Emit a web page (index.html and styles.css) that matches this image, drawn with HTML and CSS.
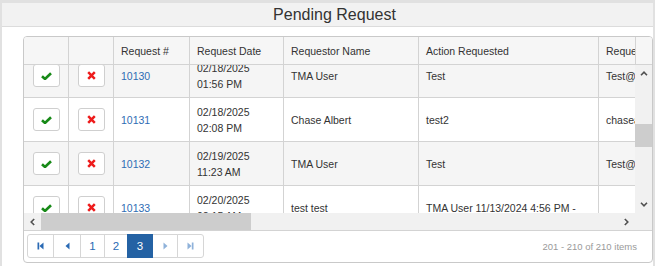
FILE: index.html
```html
<!DOCTYPE html>
<html lang="en">
  <head>
    <meta charset="UTF-8" />
    <title>Pending Request</title>
    <link rel="stylesheet" href="styles.css">
  </head>
  <body>
    <div class="panel">
      <div class="title">Pending Request</div>

      <div class="grid">
        <!-- header -->
        <div class="grid-head">
          <div class="head-view">
            <div class="row head">
              <div class="cell"></div>
              <div class="cell"></div>
              <div class="cell">Request #</div>
              <div class="cell">Request Date</div>
              <div class="cell">Requestor Name</div>
              <div class="cell">Action Requested</div>
              <div class="cell">Requestor Email</div>
              <div class="cell">Comments</div>
            </div>
          </div>
          <div class="head-spacer"></div>
        </div>

        <!-- rows -->
        <div class="grid-body">
          <div class="body-view">
            <div class="rows">
              <div class="row alt">
                <div class="cell center"><button class="act"><svg width="11" height="8" viewBox="0 0 11 8"><path d="M1 4.2 L4 7 L10 1.2" fill="none" stroke="#188a18" stroke-width="2.6"/></svg></button></div>
                <div class="cell center"><button class="act"><svg width="9" height="9" viewBox="0 0 9 9"><path d="M1.2 1.2 L7.8 7.8 M7.8 1.2 L1.2 7.8" stroke="#ee1c1c" stroke-width="2.5"/></svg></button></div>
                <div class="cell"><a href="#">10130</a></div>
                <div class="cell">02/18/2025<br>01:56 PM</div>
                <div class="cell">TMA User</div>
                <div class="cell">Test</div>
                <div class="cell">Test@tmauser.com</div>
                <div class="cell"></div>
              </div>
              <div class="row">
                <div class="cell center"><button class="act"><svg width="11" height="8" viewBox="0 0 11 8"><path d="M1 4.2 L4 7 L10 1.2" fill="none" stroke="#188a18" stroke-width="2.6"/></svg></button></div>
                <div class="cell center"><button class="act"><svg width="9" height="9" viewBox="0 0 9 9"><path d="M1.2 1.2 L7.8 7.8 M7.8 1.2 L1.2 7.8" stroke="#ee1c1c" stroke-width="2.5"/></svg></button></div>
                <div class="cell"><a href="#">10131</a></div>
                <div class="cell">02/18/2025<br>02:08 PM</div>
                <div class="cell">Chase Albert</div>
                <div class="cell">test2</div>
                <div class="cell">chasealbert@tma.com</div>
                <div class="cell"></div>
              </div>
              <div class="row alt">
                <div class="cell center"><button class="act"><svg width="11" height="8" viewBox="0 0 11 8"><path d="M1 4.2 L4 7 L10 1.2" fill="none" stroke="#188a18" stroke-width="2.6"/></svg></button></div>
                <div class="cell center"><button class="act"><svg width="9" height="9" viewBox="0 0 9 9"><path d="M1.2 1.2 L7.8 7.8 M7.8 1.2 L1.2 7.8" stroke="#ee1c1c" stroke-width="2.5"/></svg></button></div>
                <div class="cell"><a href="#">10132</a></div>
                <div class="cell">02/19/2025<br>11:23 AM</div>
                <div class="cell">TMA User</div>
                <div class="cell">Test</div>
                <div class="cell">Test@tmauser.com</div>
                <div class="cell"></div>
              </div>
              <div class="row">
                <div class="cell center"><button class="act"><svg width="11" height="8" viewBox="0 0 11 8"><path d="M1 4.2 L4 7 L10 1.2" fill="none" stroke="#188a18" stroke-width="2.6"/></svg></button></div>
                <div class="cell center"><button class="act"><svg width="9" height="9" viewBox="0 0 9 9"><path d="M1.2 1.2 L7.8 7.8 M7.8 1.2 L1.2 7.8" stroke="#ee1c1c" stroke-width="2.5"/></svg></button></div>
                <div class="cell"><a href="#">10133</a></div>
                <div class="cell">02/20/2025<br>02:15 AM</div>
                <div class="cell">test test</div>
                <div class="cell">TMA User 11/13/2024 4:56 PM -</div>
                <div class="cell"></div>
                <div class="cell"></div>
              </div>
            </div>
          </div>
          <div class="vscroll">
            <span class="sb-btn"><svg width="8" height="5" viewBox="0 0 8 5"><path d="M1 4.2 L4 1.2 L7 4.2" fill="none" stroke="#505050" stroke-width="1.6"/></svg></span>
            <div class="vtrack"><div class="vthumb"></div></div>
            <span class="sb-btn"><svg width="8" height="5" viewBox="0 0 8 5"><path d="M1 0.8 L4 3.8 L7 0.8" fill="none" stroke="#505050" stroke-width="1.6"/></svg></span>
          </div>
        </div>

        <div class="hscroll">
          <span class="sb-btn"><svg width="5" height="8" viewBox="0 0 5 8"><path d="M4.2 1 L1.2 4 L4.2 7" fill="none" stroke="#505050" stroke-width="1.6"/></svg></span>
          <div class="htrack"><div class="hthumb"></div></div>
          <span class="sb-btn"><svg width="5" height="8" viewBox="0 0 5 8"><path d="M0.8 1 L3.8 4 L0.8 7" fill="none" stroke="#505050" stroke-width="1.6"/></svg></span>
          <span class="sb-corner"></span>
        </div>

        <!-- pager -->
        <div class="pager">
          <div class="pages">
            <a class="pg w27" href="#"><svg width="7" height="8" viewBox="0 0 7 8"><rect x="0.5" y="0.5" width="1.7" height="7" fill="#2a6ab4"/><path d="M6.5 0.5 L6.5 7.5 L2.4 4 Z" fill="#2a6ab4"/></svg></a>
            <a class="pg w28" href="#"><svg width="5" height="8" viewBox="0 0 5 8"><path d="M4.5 0.5 L4.5 7.5 L0.5 4 Z" fill="#2a6ab4"/></svg></a>
            <a class="pg w25" href="#">1</a>
            <a class="pg w24" href="#">2</a>
            <span class="pg w26 active">3</span>
            <span class="pg w26 off"><svg width="5" height="8" viewBox="0 0 5 8"><path d="M0.5 0.5 L0.5 7.5 L4.5 4 Z" fill="#8fb2da"/></svg></span>
            <span class="pg w27 off"><svg width="7" height="8" viewBox="0 0 7 8"><path d="M0.5 0.5 L0.5 7.5 L4.6 4 Z" fill="#8fb2da"/><rect x="4.8" y="0.5" width="1.7" height="7" fill="#8fb2da"/></svg></span>
          </div>
          <div class="pager-info">201 - 210 of 210 items</div>
        </div>
      </div>
    </div>
  </body>
</html>
```

FILE: styles.css
```css
* {
  box-sizing: border-box;
}

body {
  margin: 0;
  background: #e1e1e1;
  font-family: "Liberation Sans", Arial, sans-serif;
  font-size: 10.5px;
  color: #333;
}

.panel {
  margin: 3px 2px 0 2px;
  height: 263px;
  background: #fff;
}

.title {
  height: 24px;
  line-height: 23px;
  padding-left: 14px;
  background: #f2f2f2;
  border-bottom: 1px solid #dcdcdc;
  text-align: center;
  font-size: 16px;
}

.grid {
  margin: 9px 0 0 21px;
  border: 1px solid #c9c9c9;
  border-radius: 4px;
  overflow: hidden;
}

/* header */
.grid-head {
  display: flex;
  height: 28px;
}

.head-view {
  flex: 1;
  min-width: 0;
  overflow: hidden;
}

.head-spacer {
  width: 17px;
  border-left: 1px solid #d3d3d3;
  border-bottom: 1px solid #d3d3d3;
  background: #f6f6f6;
}

.row {
  display: grid;
  grid-template-columns: 45px 45px 76px 94px 135px 180px 170px 200px;
  width: max-content;
}

.row.alt {
  background: #f5f5f5;
}

.cell {
  display: flex;
  align-items: center;
  padding: 6px 7px 5px;
  line-height: 16px;
  border-right: 1px solid #d3d3d3;
  border-bottom: 1px solid #d3d3d3;
  white-space: nowrap;
  overflow: hidden;
}

.cell.center {
  justify-content: center;
  padding: 0;
}

.head .cell {
  height: 28px;
  padding: 5px 7px;
  background: #f6f6f6;
}

.cell a {
  color: #2e6db4;
  text-decoration: none;
}

.act {
  width: 27px;
  height: 23px;
  padding: 0;
  border: 1px solid #cfcfcf;
  border-radius: 3px;
  background: #fff;
  display: flex;
  align-items: center;
  justify-content: center;
}

/* body + scrollbars */
.grid-body {
  display: flex;
  height: 148px;
}

.body-view {
  flex: 1;
  min-width: 0;
  overflow: hidden;
}

.rows {
  margin-top: -11px;
}

.vscroll {
  width: 17px;
  display: flex;
  flex-direction: column;
  background: #f1f1f1;
}

.sb-btn {
  width: 17px;
  height: 17px;
  flex: none;
  display: flex;
  align-items: center;
  justify-content: center;
}

.vtrack {
  flex: 1;
}

.vthumb {
  margin-top: 42px;
  height: 23px;
  background: #cdcdcd;
}

.hscroll {
  display: flex;
  height: 17px;
  background: #f1f1f1;
}

.htrack {
  flex: 1;
}

.hthumb {
  width: 210px;
  height: 17px;
  background: #cdcdcd;
}

.sb-corner {
  width: 17px;
}

/* pager */
.pager {
  display: flex;
  align-items: center;
  justify-content: space-between;
  height: 32px;
  padding: 3px 15px 4px 3px;
  border-top: 1px solid #d3d3d3;
}

.pages {
  display: flex;
}

.pg {
  height: 24px;
  margin-left: -1px;
  display: flex;
  align-items: center;
  justify-content: center;
  border: 1px solid #d6d6d6;
  background: #fff;
  color: #2a6ab4;
  font-size: 11.5px;
  text-decoration: none;
}

.pg:first-child {
  margin-left: 0;
  border-radius: 3px 0 0 3px;
}

.pg:last-child {
  border-radius: 0 3px 3px 0;
}

.pg.active {
  background: #2462a4;
  border-color: #2462a4;
  color: #fff;
  position: relative;
}

.w24 { width: 24px; }
.w25 { width: 25px; }
.w26 { width: 26px; }
.w27 { width: 27px; }
.w28 { width: 28px; }

.pager-info {
  color: #9a9a9a;
  font-size: 9.5px;
}
```
